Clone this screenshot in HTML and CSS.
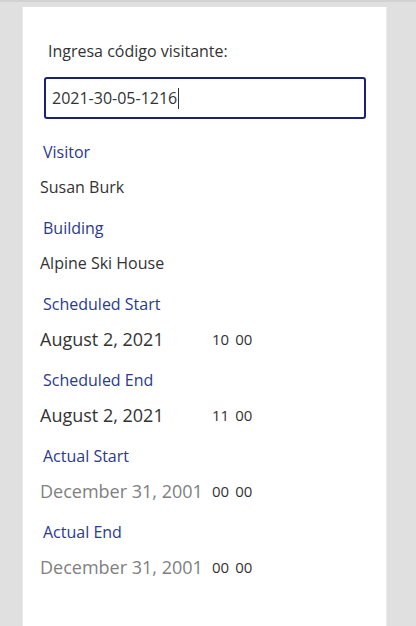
FILE: index.html
```html
<!DOCTYPE html>
<html lang="es">
<head>
<meta charset="utf-8">
<link rel="stylesheet" href="styles.css">
</head>
<body>
<div class="topline"></div>
<div class="stage">
  <main class="card">
    <div class="prompt">Ingresa código visitante:</div>
    <div class="input"><span class="input-text">2021-30-05-1216</span><span class="caret"></span></div>
    <section class="field">
      <div class="label">Visitor</div>
      <div class="value">Susan Burk</div>
    </section>
    <section class="field">
      <div class="label">Building</div>
      <div class="value">Alpine Ski House</div>
    </section>
    <section class="field">
      <div class="label">Scheduled Start</div>
      <div class="value dt"><span class="date">August 2, 2021</span><span class="time"><span>10</span><span>00</span></span></div>
    </section>
    <section class="field">
      <div class="label">Scheduled End</div>
      <div class="value dt"><span class="date">August 2, 2021</span><span class="time"><span>11</span><span>00</span></span></div>
    </section>
    <section class="field">
      <div class="label">Actual Start</div>
      <div class="value dt"><span class="date muted">December 31, 2001</span><span class="time"><span>00</span><span>00</span></span></div>
    </section>
    <section class="field">
      <div class="label">Actual End</div>
      <div class="value dt"><span class="date muted">December 31, 2001</span><span class="time"><span>00</span><span>00</span></span></div>
    </section>
  </main>
</div>
</body>
</html>
```
FILE: styles.css
```css
html, body {
  margin: 0;
  padding: 0;
  height: 100%;
}
body {
  background: #e0e0e0;
  font-family: "Open Sans", "Noto Sans", sans-serif;
  color: #333333;
  overflow: hidden;
}
.topline {
  height: 2px;
  background: #d2d2d2;
}
.stage {
  padding: 5px 0 0 22px;
  height: calc(100% - 2px);
  box-sizing: border-box;
}
.card {
  width: 365px;
  height: 100%;
  background: #ffffff;
  border-left: 1px solid #ececec;
  border-right: 1px solid #ececec;
  box-sizing: border-box;
  padding: 30px 20px 0 17px;
  display: flex;
  flex-direction: column;
}
.prompt {
  font-size: 16px;
  line-height: 28px;
  padding-left: 8px;
  color: #333;
}
.input {
  margin: 12px 0 0 4px;
  height: 42px;
  border: 2px solid #1b2177;
  border-radius: 3px;
  box-sizing: border-box;
  display: flex;
  align-items: center;
  padding-left: 6px;
  font-size: 16px;
  color: #333;
}
.caret {
  display: inline-block;
  width: 1px;
  height: 21px;
  background: #333;
  margin-left: 1px;
}
.field {
  display: flex;
  flex-direction: column;
  margin-bottom: 6px;
}
.input + .field {
  margin-top: 18px;
}
.label {
  line-height: 30px;
  height: 30px;
  font-size: 16px;
  color: #2b3990;
  padding-left: 3px;
}
.value {
  line-height: 40px;
  height: 40px;
  font-size: 16px;
  color: #333;
}
.dt {
  display: flex;
  align-items: center;
}
.date {
  font-size: 18px;
  width: 172px;
  flex: none;
}
.date.muted {
  color: #808080;
}
.time {
  display: flex;
  gap: 6px;
  font-size: 15px;
  color: #333;
}
```
